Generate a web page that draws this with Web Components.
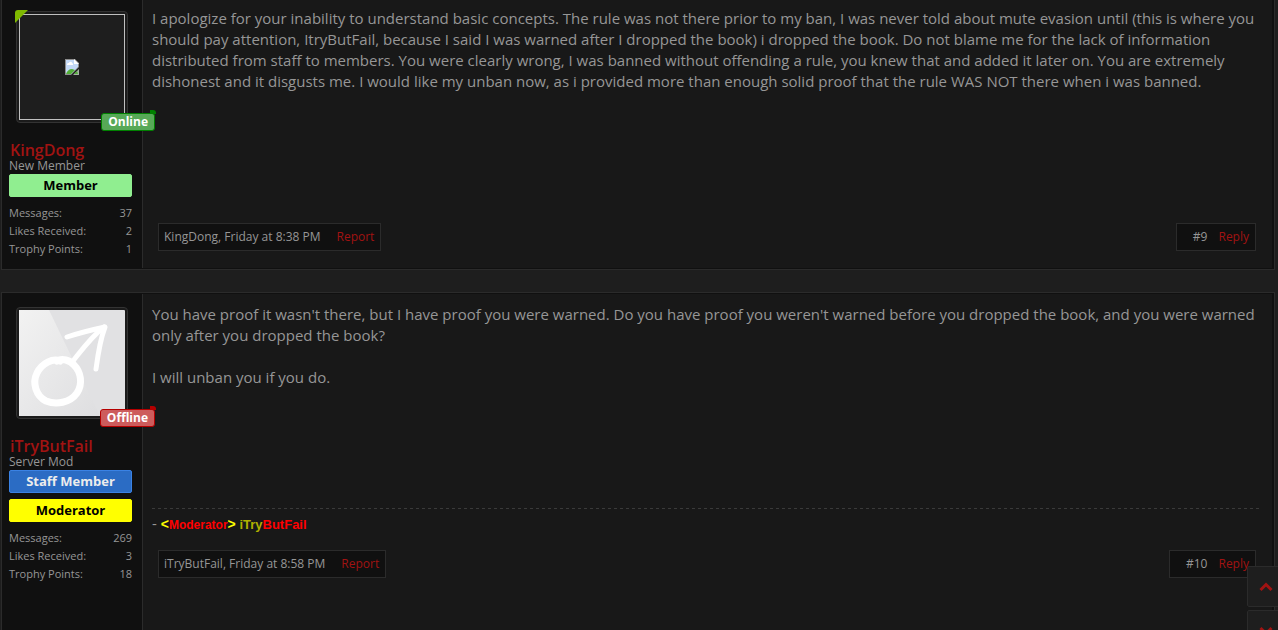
<!DOCTYPE html>
<html lang="en">
<head>
<meta charset="utf-8">
<meta name="viewport" content="width=device-width, initial-scale=1">
<title>Ban appeal</title>
<style>
  html {
    background: #1e1e1e;
    overflow: hidden;
  }
  body {
    margin: 0;
    color: #969696;
    font: 12px/18px "Open Sans", sans-serif;
  }
  main {
    display: flex;
    flex-direction: column;
    gap: 22px;
    padding: 0 3px 0 1px;
  }
  p {
    margin: 0 0 21px;
  }
  .dash { font-size: 15px; }
  .sig {
    font: bold 13px/18px "Liberation Sans", Arial, sans-serif;
  }
  .role { font-size: 12px; }
  .yellow { color: #ff0; font-size: 14px; }
  .olive { color: #b0b000; }
  .red { color: #f00; }
</style>
</head>
<body>
<main>
  <forum-post class="first" author="KingDong" date="Friday at 8:38 PM" number="9">
    <user-card slot="user" name="KingDong" rank="New Member" status="online" messages="37" likes="2" points="1">
      <user-avatar slot="avatar" kind="missing"></user-avatar>
      <user-banner color="member">Member</user-banner>
    </user-card>
    <p>I apologize for your inability to understand basic concepts. The rule was not there prior to my ban, I was never told about mute evasion until (this is where you<br>
    should pay attention, ItryButFail, because I said I was warned after I dropped the book) i dropped the book. Do not blame me for the lack of information<br>
    distributed from staff to members. You were clearly wrong, I was banned without offending a rule, you knew that and added it later on. You are extremely<br>
    dishonest and it disgusts me. I would like my unban now, as i provided more than enough solid proof that the rule WAS NOT there when i was banned.</p>
  </forum-post>

  <forum-post class="last" author="iTryButFail" date="Friday at 8:58 PM" number="10">
    <user-card slot="user" name="iTryButFail" rank="Server Mod" status="offline" messages="269" likes="3" points="18">
      <user-avatar slot="avatar" kind="male"></user-avatar>
      <user-banner color="staff">Staff Member</user-banner>
      <user-banner color="moderator">Moderator</user-banner>
    </user-card>
    <p>You have proof it wasn't there, but I have proof you were warned. Do you have proof you weren't warned before you dropped the book, and you were warned<br>
    only after you dropped the book?</p>
    <p>I will unban you if you do.</p>
    <div slot="signature"><span class="dash">- </span><span class="sig"><span class="yellow">&lt;</span><span class="red role">Moderator</span><span class="yellow">&gt;</span> <span class="olive">iTry</span><span class="red">ButFail</span></span></div>
  </forum-post>
</main>
<scroll-buttons></scroll-buttons>

<script>
const avatars = {
  missing: `
    <svg class="broken" viewBox="0 0 106 106" role="img" aria-label="Avatar">
      <rect x=".5" y=".5" width="105" height="105" fill="#1e1e1e" stroke="#c0c0c0"/>
      <g transform="translate(46 45)">
        <path d="M0 0h10l4 4v4L6 16H0z" fill="#8d8d8d"/>
        <path d="M1 1h8v4h4v3l-7 7H1z" fill="#c3d9f7"/>
        <path d="M9 0l5 5H9z" fill="#fff"/>
        <path d="M2 6c0-2 1-2 2-2 1-2 3-1 3 0 1 0 1 1 1 2z" fill="#fff"/>
        <path d="M1 15c1-3 3-5 6-5 1 0 2 1 3 1l-4 4z" fill="#53ae38"/>
        <path d="M8 16l6-6v6z" fill="#a5b0a5"/>
        <path d="M9 15l3-3 1 3z" fill="#53ae38"/>
      </g>
    </svg>`,
  male: `
    <svg viewBox="0 0 106 106" role="img" aria-label="Avatar">
      <defs><linearGradient id="shine" x2="1" y2="1"><stop stop-color="#f2f2f2"/><stop offset="1" stop-color="#dedee0"/></linearGradient></defs>
      <rect width="106" height="106" rx="1" fill="#e1e1e3"/>
      <path d="M0 0h30l51 106H0z" fill="url(#shine)"/>
      <g fill="none" stroke="#fff" stroke-linecap="round" stroke-linejoin="round">
        <path d="M41 51C34 48 23 53 18 63 13 73 17 86 27 91c10 4 24 2 31-8 6-9 4-21-3-28-4-5-12-7-17-4" stroke-width="7"/>
        <path d="M54 51C62 41 72 27 85 17" stroke-width="5"/>
        <path d="M48 27c12-4 24-7 38-10-5 13-7 27-9 42" stroke-width="5"/>
      </g>
    </svg>`
};

class UserAvatar extends HTMLElement {
  constructor() {
    super();
    this.attachShadow({mode: 'open'}).innerHTML = `
      <style>
        :host { display: block; }
        a {
          display: block;
          width: 106px;
          height: 106px;
          padding: 2px;
          border: 1px solid #333;
          border-radius: 4px;
          background: #1b1b1b;
        }
        svg { display: block; width: 100%; height: 100%; }
      </style>
      <a href="#profile">${avatars[this.getAttribute('kind')]}</a>
    `;
  }
}

class UserBanner extends HTMLElement {
  constructor() {
    super();
    this.attachShadow({mode: 'open'}).innerHTML = `
      <style>
        :host {
          display: block;
          box-sizing: border-box;
          height: 23px;
          border: 1px solid var(--line);
          border-radius: 2px;
          background: var(--back);
          color: #000;
          font-size: 13px;
          font-weight: bold;
          line-height: 20px;
          text-align: center;
        }
        :host([color="member"]) { --back: #90ee90; --line: #90ee90; }
        :host([color="staff"]) { --back: #2b6cc4; --line: #3a82e4; color: #ececec; }
        :host([color="moderator"]) { --back: #ff0; --line: #ff0; }
      </style>
      <slot></slot>
    `;
  }
}

class UserCard extends HTMLElement {
  constructor() {
    super();
    const get = name => this.getAttribute(name);
    const online = get('status') === 'online';
    this.attachShadow({mode: 'open'}).innerHTML = `
      <style>
        :host { display: block; padding: 13px 10px 10px 7px; }
        .avatar {
          position: relative;
          width: 112px;
          margin: 0 0 19px 7px;
        }
        .corner {
          position: absolute;
          left: -1px;
          top: -1px;
          width: 13px;
          height: 13px;
          background: #7fb900;
          border-top-left-radius: 3px;
          clip-path: polygon(0 0, 100% 0, 0 100%);
        }
        .status {
          position: absolute;
          right: -27px;
          bottom: -8px;
          padding: 0 6px;
          border: 1px solid var(--dark);
          border-radius: 3px;
          background: var(--light);
          color: #fff;
          font-size: 12px;
          font-weight: bold;
          line-height: 16px;
        }
        .status::after {
          content: "";
          position: absolute;
          right: -2px;
          top: -4px;
          width: 6px;
          height: 4px;
          border-top-right-radius: 3px;
          background: var(--dark);
        }
        .online { --light: #57a957; --dark: #008000; }
        .offline { --light: #cd5c5c; --dark: #b50000; }
        h3 { margin: 0; padding-left: 1px; font-size: 16px; font-weight: 600; line-height: 16px; }
        h3 a { color: #a11312; text-decoration: none; }
        .rank { line-height: 16px; }
        .banners { display: grid; gap: 6px; margin-bottom: 7px; }
        dl { margin: 0; }
        dl div { display: flex; justify-content: space-between; }
        dd { margin: 0; }
        .stats { font-size: 11px; line-height: 18px; }
      </style>
      <div class="avatar">
        <slot name="avatar"></slot>
        ${online ? '<span class="corner"></span>' : ''}
        <span class="status ${get('status')}">${online ? 'Online' : 'Offline'}</span>
      </div>
      <h3><a href="#profile">${get('name')}</a></h3>
      <div class="rank">${get('rank')}</div>
      <div class="banners"><slot></slot></div>
      <dl class="stats">
        <div><dt>Messages:</dt><dd>${get('messages')}</dd></div>
        <div><dt>Likes Received:</dt><dd>${get('likes')}</dd></div>
        <div><dt>Trophy Points:</dt><dd>${get('points')}</dd></div>
      </dl>
    `;
  }
}

class ForumPost extends HTMLElement {
  constructor() {
    super();
    const get = name => this.getAttribute(name);
    const signed = this.querySelector('[slot="signature"]');
    this.attachShadow({mode: 'open'}).innerHTML = `
      <style>
        :host {
          display: flex;
          border: 1px solid #2b2b2b;
          background: #101010;
          padding: 1px 2px 1px 0;
        }
        :host(.first) { border-top: 0; padding-top: 0; margin-top: -2px; }
        :host(.last) { min-height: 350px; }
        aside { flex: 0 0 140px; }
        article {
          flex: 1;
          min-width: 0;
          padding: 10px 11px 16px 9px;
          border-left: 1px solid #2b2b2b;
          background: #181818;
        }
        .text {
          min-height: 215px;
          font-size: 15px;
          line-height: 21px;
        }
        .text.signed { min-height: 204px; }
        .signature {
          height: 36px;
          padding-top: 6px;
          background: repeating-linear-gradient(90deg, #3a3a3a 0 3px, transparent 3px 6px) 0 0 / 100% 1px no-repeat;
        }
        .meta {
          display: flex;
          justify-content: space-between;
          margin: 0 5px 0 6px;
        }
        .box {
          display: flex;
          gap: 16px;
          padding: 4px 6px 4px 5px;
          border: 1px solid #2b2b2b;
          background: #101010;
        }
        .right { gap: 11px; padding-left: 16px; }
        a { color: inherit; text-decoration: none; }
        .action { color: #a11312; }
      </style>
      <aside><slot name="user"></slot></aside>
      <article>
        <div class="text ${signed ? 'signed' : ''}"><slot></slot></div>
        ${signed ? '<div class="signature"><slot name="signature"></slot></div>' : ''}
        <div class="meta">
          <div class="box">
            <span><a href="#profile">${get('author')}</a>, <a href="#post">${get('date')}</a></span>
            <a class="action" href="#report">Report</a>
          </div>
          <div class="box right">
            <a href="#post">#${get('number')}</a>
            <a class="action" href="#reply">Reply</a>
          </div>
        </div>
      </article>
    `;
  }
}

class ScrollButtons extends HTMLElement {
  constructor() {
    super();
    this.attachShadow({mode: 'open'}).innerHTML = `
      <style>
        :host {
          position: fixed;
          right: -7px;
          bottom: -21px;
          display: grid;
          gap: 3px;
        }
        button {
          display: grid;
          place-items: center;
          width: 38px;
          height: 41px;
          padding: 0;
          border: 1px solid #2b2b2b;
          border-radius: 2px;
          background: #1e1e1e;
        }
        svg { fill: none; stroke: #a11312; stroke-width: 3; }
      </style>
      <button aria-label="Scroll to top"><svg width="14" height="10"><path d="M1.500 8L7 2.500 12.500 8"/></svg></button>
      <button aria-label="Scroll to bottom"><svg width="14" height="10"><path d="M1.500 2L7 7.500 12.500 2"/></svg></button>
    `;
  }
}

customElements.define('user-avatar', UserAvatar);
customElements.define('user-banner', UserBanner);
customElements.define('user-card', UserCard);
customElements.define('forum-post', ForumPost);
customElements.define('scroll-buttons', ScrollButtons);
</script>
</body>
</html>
